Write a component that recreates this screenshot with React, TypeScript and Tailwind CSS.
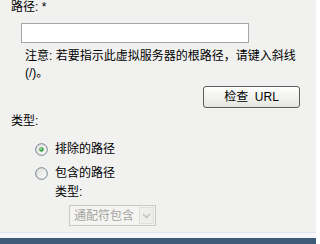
import React from 'react';

const Radio = ({ checked }: { checked: boolean }) => (
  <svg width="13" height="13" viewBox="0 0 13 13" className="shrink-0">
    <defs>
      <linearGradient id={checked ? 'rg1' : 'rg2'} x1="0" y1="0" x2="1" y2="1">
        <stop offset="0" stopColor="#dcdcd6" />
        <stop offset="1" stopColor="#ffffff" />
      </linearGradient>
    </defs>
    <circle cx="6.5" cy="6.5" r="5.8" fill={`url(#${checked ? 'rg1' : 'rg2'})`} stroke="#6f7f8c" strokeWidth="1" />
    {checked && <circle cx="6.5" cy="6.5" r="2.3" fill="#3fa34a" />}
    {checked && <circle cx="6" cy="6" r="0.9" fill="#9be09f" />}
  </svg>
);

const App = () => {
  return (
    <div
      className="w-[316px] h-[244px] bg-[#f1f1f0] text-[12px] text-black flex flex-col overflow-hidden"
      style={{ fontFamily: '"Liberation Sans", "Noto Sans CJK SC", sans-serif' }}
    >
      <div className="flex-1 flex flex-col items-start pl-[11px]">
        <div className="leading-[14px]">路径: *</div>

        <input
          type="text"
          className="mt-[9px] ml-[10px] w-[228px] h-[20px] bg-white border border-[#a3a8ad] outline-none"
        />

        <div className="mt-[5px] ml-[14px] leading-[17px] whitespace-nowrap">
          注意: 若要指示此虚拟服务器的根路径，请键入斜线
          <br />
          (/)。
        </div>

        <button className="mt-[4px] ml-[192px] w-[97px] h-[22px] rounded-[3px] border border-[#5c5c5c] bg-gradient-to-b from-white to-[#e6e6e0] flex items-center justify-center text-[12px] leading-none">
          检查&nbsp;&nbsp;URL
        </button>

        <div className="mt-[6px] leading-[14px]">类型:</div>

        <label className="mt-[13px] ml-[24px] h-[16px] flex items-center gap-[7px]">
          <Radio checked />
          <span className="leading-[14px]">排除的路径</span>
        </label>

        <label className="mt-[8px] ml-[24px] h-[16px] flex items-center gap-[7px]">
          <Radio checked={false} />
          <span className="leading-[14px]">包含的路径</span>
        </label>

        <div className="mt-[4px] ml-[44px] leading-[14px]">类型:</div>

        <div className="mt-[6px] ml-[58px] w-[87px] h-[21px] border border-[#c9c9c2] bg-[#f4f4f2] flex items-center">
          <span className="flex-1 pl-[4px] text-[#a5a5a0] leading-none">通配符包含</span>
          <span className="w-[15px] h-[17px] mr-[1px] border border-[#e0e0da] bg-[#eeeeea] flex items-center justify-center">
            <svg width="9" height="6" viewBox="0 0 9 6">
              <path d="M1 1 L4.5 4.5 L8 1" fill="none" stroke="#c4c4be" strokeWidth="1.6" />
            </svg>
          </span>
        </div>
      </div>

      <div className="h-[6px] bg-[#f8f8fc] border-t border-[#e4e4ea]" />
      <div className="h-[6px] bg-[#3e5b78]" />
    </div>
  );
};

export default App;
